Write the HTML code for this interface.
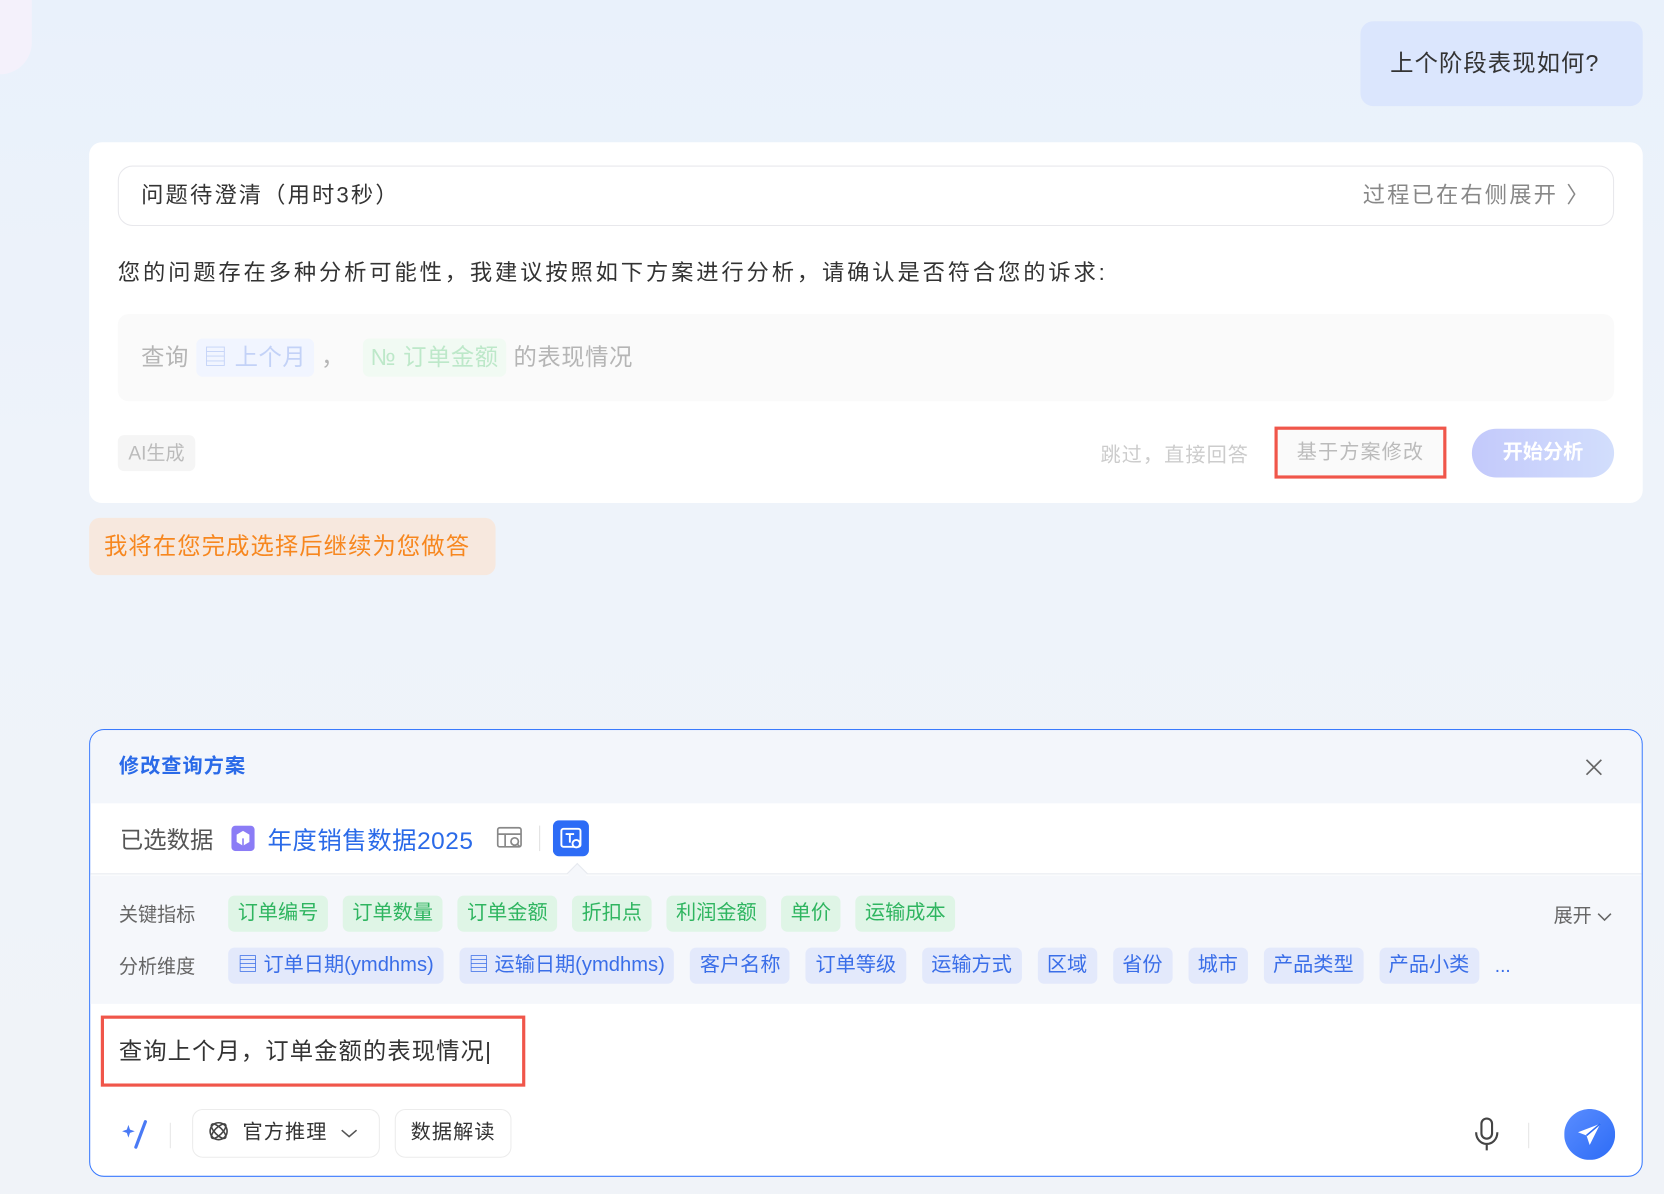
<!DOCTYPE html>
<html><head><meta charset="utf-8"><style>
*{box-sizing:border-box;margin:0;padding:0}
html,body{width:1664px;height:1194px;overflow:hidden}
body{font-family:"Liberation Sans","Noto Sans CJK SC",sans-serif;background:#f1f4f9}
#w{position:absolute;left:0;top:0;width:1568px;height:1125px;transform:scale(1.0612);transform-origin:0 0;
background:linear-gradient(180deg,#e9f1fb 0%,#eef3fa 40%,#f0f3f8 100%);overflow:hidden}
.abs{position:absolute}
.ub{left:1282px;top:20px;width:266px;height:80px;background:#dbe6fd;border-radius:12px;font-size:22px;color:#333;line-height:80px;padding-left:28px;letter-spacing:1px}
.card{left:84px;top:134px;width:1464px;height:340px;background:#fff;border-radius:12px}
.hd{left:27px;top:22px;width:1410px;height:57px;border:1px solid #e8e8ec;border-radius:14px;font-size:21px;color:#333;line-height:55px;padding:0 21px;letter-spacing:2px}
.hd span{float:right;color:#888}
.t1{left:27px;top:107px;font-size:21px;color:#333;letter-spacing:2.7px}
.q{left:27px;top:162px;width:1410px;height:82px;background:#fafafa;border-radius:10px;font-size:22px;color:#b5b5b5;line-height:82px;padding-left:22px;display:flex;align-items:center;gap:7px;letter-spacing:.5px}
.c{height:36px;line-height:36px;padding:0 7px;border-radius:6px}
.aig{left:27px;top:276px;width:73px;height:34px;background:#f5f5f5;border-radius:6px;color:#bbb;font-size:18px;line-height:34px;text-align:center}
.skip{left:953px;top:280px;color:#ccc;font-size:19px;letter-spacing:1px}
.mod{left:1117px;top:268px;width:162px;height:49px;border:3px solid #f0564a;color:#bbb;font-size:19px;line-height:43px;text-align:center;background:#fafafa;letter-spacing:1px}
.go{left:1303px;top:270px;width:134px;height:46px;border-radius:23px;background:linear-gradient(90deg,#c3c9fb,#d2defc);color:#fff;font-size:19px;line-height:46px;text-align:center;font-weight:bold}
.ob{left:84px;top:488px;width:383px;height:54px;background:#f7e8de;border-radius:10px;color:#f7871f;font-size:22px;line-height:54px;padding-left:14px;letter-spacing:1px}
.md{left:84px;top:687px;width:1464px;height:422px;border:1px solid #3a7afe;border-radius:14px;background:#fff;overflow:hidden}
.mh{left:0;top:0;width:100%;height:69px;background:#f3f6fb;color:#2a6ae8;font-weight:bold;font-size:19px;line-height:69px;padding-left:27px;letter-spacing:1px}
.sel{left:0;top:69px;width:100%;height:67px;border-bottom:1px solid #e6e9ef;display:flex;align-items:center;padding-left:28px;font-size:22px;color:#555}
.area{left:0;top:137px;width:100%;height:121px;background:#f5f7fb}
.row{position:absolute;left:27px;display:flex;align-items:center;font-size:18px;color:#666}
.row .lb{width:103px}
.g{background:#dff5e6;color:#2fb560;height:34px;line-height:34px;padding:0 9px;border-radius:6px;margin-right:14px;font-size:19px}
.b{background:#e3e9fb;color:#3a6ee8;height:34px;line-height:34px;padding:0 9px;border-radius:6px;margin-right:15px;font-size:19px}
.inp{left:10px;top:269px;width:400px;height:67px;border:3px solid #f0564a;font-size:22px;color:#333;line-height:61px;padding-left:14px;letter-spacing:1px}
.pill{height:46px;border:1px solid #ececec;border-radius:10px;font-size:19px;color:#333;line-height:44px;top:357px;letter-spacing:1px}
</style></head><body><div id="w">
<div class="abs" style="left:-30px;top:-30px;width:60px;height:100px;border-radius:30px;background:#f4f1fb"></div>
<div class="abs ub">上个阶段表现如何?</div>
<div class="abs card">
 <div class="abs hd">问题待澄清（用时3秒）<span>过程已在右侧展开 〉</span></div>
 <div class="abs t1">您的问题存在多种分析可能性，我建议按照如下方案进行分析，请确认是否符合您的诉求:</div>
 <div class="abs q">查询 <span class="c" style="background:#f1f5ff;color:#c3d2f7">▤ 上个月</span> ， <span class="c" style="background:#f1faf3;color:#bde8c9;margin-left:10px">№ 订单金额</span> 的表现情况</div>
 <div class="abs aig">AI生成</div>
 <div class="abs skip">跳过，直接回答</div>
 <div class="abs mod">基于方案修改</div>
 <div class="abs go">开始分析</div>
</div>
<div class="abs ob">我将在您完成选择后继续为您做答</div>
<div class="abs md">
 <div class="abs mh">修改查询方案
  <svg class="abs" style="right:36px;top:26px" width="18" height="18" viewBox="0 0 18 18"><path d="M2 2L16 16M16 2L2 16" stroke="#666" stroke-width="1.6"/></svg></div>
 <div class="abs sel">已选数据
  <svg style="margin:0 12px 0 17px" width="22" height="24" viewBox="0 0 22 24"><rect width="22" height="24" rx="4" fill="#8b7cf6"/><path d="M11 5L17 8.5V15.5L11 19L5 15.5V8.5Z" fill="#fff"/><path d="M11 12V19" stroke="#8b7cf6" stroke-width="1.5"/></svg>
  <span style="color:#2a6ae8;font-size:23px;letter-spacing:.5px">年度销售数据2025</span>
  <svg style="margin-left:22px" width="26" height="22" viewBox="0 0 26 22"><rect x="1" y="1" width="22" height="18" rx="2" fill="none" stroke="#888" stroke-width="1.6"/><path d="M1 7H23M8 7V19" stroke="#888" stroke-width="1.6"/><circle cx="17" cy="14" r="3.5" fill="#fff" stroke="#888" stroke-width="1.6"/><path d="M19.5 16.5L22 19" stroke="#888" stroke-width="1.6"/></svg>
  <span style="display:inline-block;width:1px;height:24px;background:#e2e2e2;margin-left:14px"></span>
  <svg style="margin-left:12px" width="34" height="34" viewBox="0 0 34 34"><rect width="34" height="34" rx="6" fill="#2d6cf6"/><rect x="8" y="8" width="18" height="17" rx="2" fill="none" stroke="#fff" stroke-width="1.8"/><path d="M12 13H20M16 13V21" stroke="#fff" stroke-width="1.8"/><circle cx="22" cy="22" r="3.5" fill="#2d6cf6" stroke="#fff" stroke-width="1.8"/></svg>
 </div>
 <div class="abs" style="left:452px;top:128px;width:14px;height:14px;background:#f5f7fb;border-left:1px solid #e6e9ef;border-top:1px solid #e6e9ef;transform:rotate(45deg)"></div>
 <div class="abs area">
  <div class="row" style="top:19px"><span class="lb">关键指标</span><span class="g">订单编号</span><span class="g">订单数量</span><span class="g">订单金额</span><span class="g">折扣点</span><span class="g">利润金额</span><span class="g">单价</span><span class="g">运输成本</span></div>
  <div class="abs" style="right:28px;top:24px;font-size:18px;color:#666">展开 <svg width="14" height="10" viewBox="0 0 14 10"><path d="M1 2L7 8L13 2" fill="none" stroke="#666" stroke-width="1.5"/></svg></div>
  <div class="row" style="top:68px"><span class="lb">分析维度</span><span class="b">▤ 订单日期(ymdhms)</span><span class="b">▤ 运输日期(ymdhms)</span><span class="b">客户名称</span><span class="b">订单等级</span><span class="b">运输方式</span><span class="b">区域</span><span class="b">省份</span><span class="b">城市</span><span class="b">产品类型</span><span class="b">产品小类</span><span style="color:#3a6ee8">...</span></div>
 </div>
 <div class="abs inp">查询上个月，订单金额的表现情况|</div>
 <svg class="abs" style="left:28px;top:366px" width="30" height="30" viewBox="0 0 30 30"><path d="M8 6L9.5 10.5L14 12L9.5 13.5L8 18L6.5 13.5L2 12L6.5 10.5Z" fill="#4a7af5"/><path d="M24 3L15 27" stroke="#4a7af5" stroke-width="3" stroke-linecap="round"/></svg>
 <div class="abs" style="left:75px;top:370px;width:1px;height:24px;background:#e6e6e6"></div>
 <div class="abs pill" style="left:96px;width:177px;padding-left:14px">
  <svg style="vertical-align:-3px" width="20" height="20" viewBox="0 0 20 20"><circle cx="10" cy="10" r="8" fill="none" stroke="#444" stroke-width="1.5"/><ellipse cx="10" cy="10" rx="9" ry="3.5" transform="rotate(45 10 10)" fill="none" stroke="#444" stroke-width="1.5"/><ellipse cx="10" cy="10" rx="9" ry="3.5" transform="rotate(-45 10 10)" fill="none" stroke="#444" stroke-width="1.5"/></svg>&nbsp; 官方推理 &nbsp;<svg width="16" height="10" viewBox="0 0 16 10"><path d="M1 2L8 8L15 2" fill="none" stroke="#555" stroke-width="1.5"/></svg></div>
 <div class="abs pill" style="left:287px;width:110px;text-align:center">数据解读</div>
 <svg class="abs" style="left:1302px;top:364px" width="28" height="34" viewBox="0 0 28 34"><rect x="9" y="2" width="10" height="19" rx="5" fill="none" stroke="#444" stroke-width="2"/><path d="M4 15C4 22 9 26 14 26C19 26 24 22 24 15M14 26V32" fill="none" stroke="#444" stroke-width="2"/></svg>
 <div class="abs" style="left:1355px;top:370px;width:1px;height:24px;background:#e6e6e6"></div>
 <svg class="abs" style="left:1389px;top:357px" width="48" height="48" viewBox="0 0 48 48"><defs><linearGradient id="sg" x1="0" y1="0" x2="1" y2="1"><stop offset="0" stop-color="#5a8dff"/><stop offset="1" stop-color="#2d6cf6"/></linearGradient></defs><circle cx="24" cy="24" r="24" fill="url(#sg)"/><path d="M34 14L13 22L21 25L24 34Z" fill="#fff"/><path d="M34 14L21 25" stroke="#2d6cf6" stroke-width="1.5"/></svg>
</div>
</div></body></html>
